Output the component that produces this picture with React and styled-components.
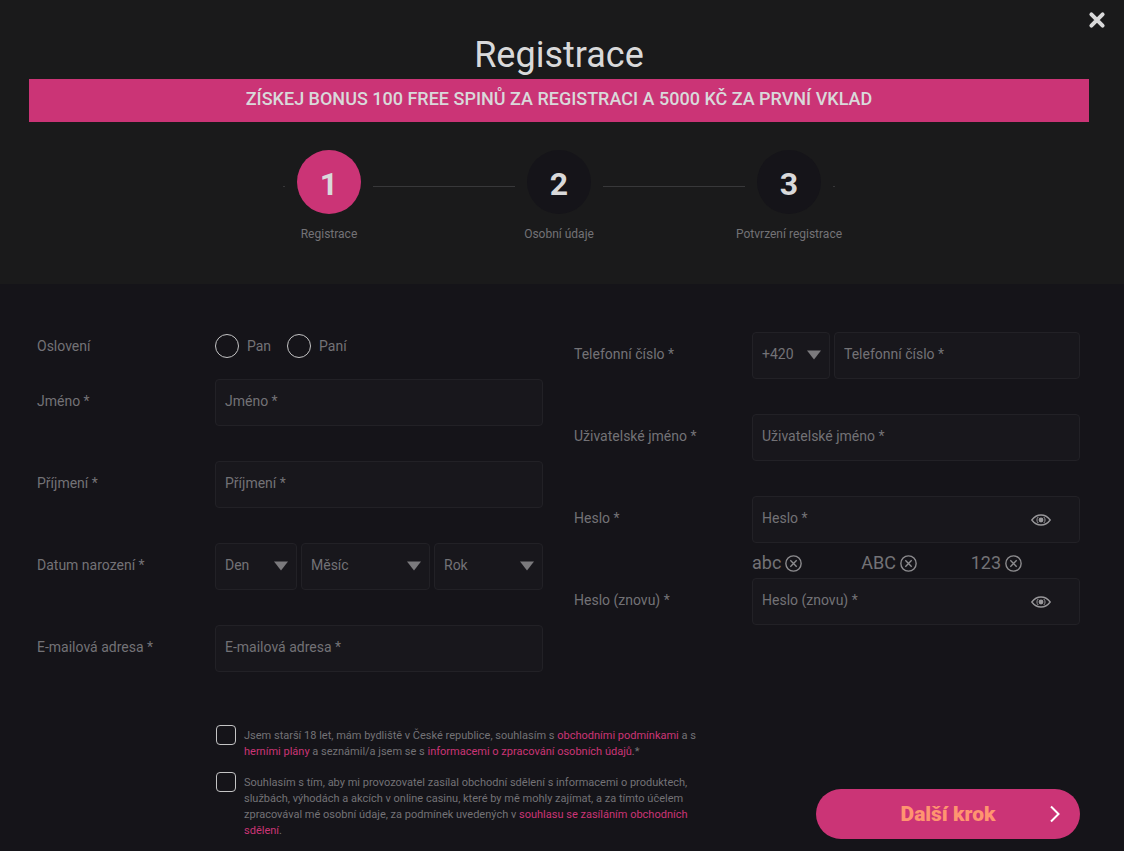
import React from "react";
import styled, { createGlobalStyle, css } from "styled-components";

const Global = createGlobalStyle`
  * { box-sizing: border-box; }
  body {
    margin: 0;
    background: #151419;
    color: #737276;
    font-family: Roboto, "Liberation Sans", sans-serif;
    font-size: 14px;
    line-height: 20px;
  }
`;

const pink = "#cb3476";
const light = "#d9d9da";

const Page = styled.main`
  position: relative;
  min-height: 100vh;
`;

const Header = styled.header`
  display: flex;
  flex-direction: column;
  align-items: center;
  min-height: 284px;
  padding: 31px 35px 40px 29px;
  background: #1a1a1b;
`;

const Title = styled.h1`
  margin: 0;
  color: ${light};
  font-size: 36px;
  font-weight: 400;
  line-height: 48px;
`;

const Banner = styled.p`
  width: 100%;
  margin: 0 0 28px;
  padding: 8px 16px 11px;
  background: ${pink};
  color: ${light};
  font-size: 18px;
  font-weight: 500;
  line-height: 24px;
  text-align: center;
`;

const CloseButton = styled.button`
  position: absolute;
  top: 8px;
  right: 15px;
  display: flex;
  padding: 0;
  border: 0;
  background: none;
  color: ${light};
  cursor: pointer;
`;

const Steps = styled.ol`
  display: flex;
  gap: 12px;
  width: 100%;
  max-width: 552px;
  margin: 0;
  padding: 0;
  list-style: none;
`;

const StepLine = styled.li`
  flex: ${(p) => (p.$end ? "0 0 2px" : "1")};
  height: 1px;
  margin-top: 36px;
  background: #38383a;
`;

const Step = styled.li`
  display: flex;
  flex-direction: column;
  align-items: center;
  width: 64px;
  font-size: 12px;
  line-height: 16px;
  white-space: nowrap;
`;

const StepNumber = styled.span`
  display: flex;
  align-items: center;
  justify-content: center;
  width: 64px;
  height: 64px;
  margin-bottom: 12px;
  padding-top: 4px;
  border-radius: 50%;
  background: ${(p) => (p.$active ? pink : "#151419")};
  color: ${light};
  font-size: 32px;
  font-weight: 700;
`;

const Form = styled.form`
  padding: 48px 44px 10px 37px;
`;

const Columns = styled.div`
  display: grid;
  grid-template-columns: 1fr 1fr;
  column-gap: 31px;
`;

const Row = styled.div`
  display: grid;
  grid-template-columns: 178px minmax(0, 1fr);
  grid-template-rows: 47px 35px;
`;

const rowLabel = css`
  height: 44px;
  line-height: 44px;
`;

const Label = styled.label`
  ${rowLabel}
`;

const GroupLabel = styled.span`
  ${rowLabel}
`;

const RadioRow = styled.div`
  display: grid;
  grid-template-columns: 178px minmax(0, 1fr);
  align-items: center;
  height: 28px;
  margin-bottom: 19px;
`;

const Radios = styled.div`
  display: flex;
  gap: 16px;
`;

const RadioLabel = styled.label`
  display: flex;
  align-items: center;
  gap: 8px;
`;

const Radio = styled.input`
  appearance: none;
  width: 24px;
  height: 24px;
  margin: 0;
  border: 1px solid #c4c4c5;
  border-radius: 50%;
  &:checked { box-shadow: inset 0 0 0 5px #151419; background: ${pink}; }
`;

const control = css`
  width: 100%;
  height: 47px;
  padding: 0 9px 3px;
  border: 1px solid #222126;
  border-radius: 4px;
  background: #18171c;
  color: #737276;
  font: inherit;
`;

const TextInput = styled.input`
  ${control}
  &::placeholder { color: #737276; opacity: 1; }
`;

const SelectBox = styled.div`
  position: relative;
`;

const SelectInput = styled.select`
  ${control}
  appearance: none;
`;

const Arrow = styled.svg`
  position: absolute;
  top: 18px;
  right: 9px;
  pointer-events: none;
`;

const DateFields = styled.div`
  display: grid;
  grid-template-columns: 82fr 129fr 109fr;
  gap: 4px;
`;

const PhoneFields = styled.div`
  display: grid;
  grid-template-columns: 78px 1fr;
  gap: 4px;
`;

const PasswordBox = styled.div`
  position: relative;
`;

const RevealButton = styled.button`
  position: absolute;
  top: 17px;
  right: 29px;
  display: flex;
  padding: 0;
  border: 0;
  background: none;
  color: #99989b;
  cursor: pointer;
`;

const Rules = styled.ul`
  grid-column: 2;
  display: grid;
  grid-template-columns: repeat(3, 1fr);
  margin: 0;
  padding: 8px 0 3px;
  list-style: none;
  font-size: 18px;
  line-height: 24px;
`;

const Rule = styled.li`
  display: flex;
  align-items: center;
  gap: 4px;
`;

const Footer = styled.div`
  display: flex;
  align-items: flex-end;
  justify-content: space-between;
  gap: 24px;
  padding: 18px 0 0 179px;
`;

const Consents = styled.div`
  display: grid;
  gap: 12px;
`;

const Consent = styled.label`
  display: grid;
  grid-template-columns: 20px 1fr;
  column-gap: 8px;
  font-size: 11px;
  line-height: 16px;
  white-space: nowrap;
`;

const Checkbox = styled.input`
  appearance: none;
  width: 20px;
  height: 20px;
  margin: 0;
  border: 1px solid #c4c4c5;
  border-radius: 4px;
  &:checked { background: ${pink}; }
`;

const ConsentText = styled.span`
  padding-top: 3px;
`;

const Link = styled.a`
  color: ${pink};
  text-decoration: none;
`;

const NextButton = styled.button`
  position: relative;
  width: 264px;
  height: 50px;
  border: 0;
  border-radius: 25px;
  background: ${pink};
  color: #ff9470;
  font-family: inherit;
  font-size: 21px;
  font-weight: 900;
  cursor: pointer;
`;

const NextIcon = styled.svg`
  position: absolute;
  top: 16px;
  right: 19px;
`;

function Select({ id, label, value, options = [] }) {
  return (
    <SelectBox>
      <SelectInput id={id} aria-label={label} defaultValue={value}>
        <option>{value}</option>
        {options.map((o) => <option key={o}>{o}</option>)}
      </SelectInput>
      <Arrow width="14" height="10" viewBox="0 0 14 10" aria-hidden="true">
        <path d="M0 0.5H14L7 9.5Z" fill="#7b7a7d" />
      </Arrow>
    </SelectBox>
  );
}

function Field({ id, label, type = "text" }) {
  return (
    <Row>
      <Label htmlFor={id}>{label}</Label>
      <TextInput id={id} type={type} placeholder={label} />
    </Row>
  );
}

function PasswordField({ id, label, children }) {
  return (
    <Row>
      <Label htmlFor={id}>{label}</Label>
      <PasswordBox>
        <TextInput id={id} type="password" placeholder={label} />
        <RevealButton type="button" aria-label="Zobrazit heslo">
          <svg width="20" height="14" viewBox="0 0 20 14" fill="none" stroke="currentColor">
            <path d="M0.8 7C3 4 6.2 2 10 2S17 4 19.2 7C17 10 13.8 12 10 12S3 10 0.8 7Z" strokeWidth="1.3" />
            <path d="M7.3 3.9A4.2 4.2 0 0 0 7.3 10.1M12.7 3.9A4.2 4.2 0 0 1 12.7 10.1" strokeWidth="1" />
            <circle cx="10" cy="7" r="2.4" fill="currentColor" stroke="none" />
          </svg>
        </RevealButton>
      </PasswordBox>
      {children}
    </Row>
  );
}

export default function App() {
  return (
    <Page>
      <Global />
      <Header>
        <Title>Registrace</Title>
        <Banner>ZÍSKEJ BONUS 100 FREE SPINŮ ZA REGISTRACI A 5000 KČ ZA PRVNÍ VKLAD</Banner>
        <Steps>
          <StepLine $end aria-hidden="true" />
          <Step><StepNumber $active>1</StepNumber>Registrace</Step>
          <StepLine aria-hidden="true" />
          <Step><StepNumber>2</StepNumber>Osobní údaje</Step>
          <StepLine aria-hidden="true" />
          <Step><StepNumber>3</StepNumber>Potvrzení registrace</Step>
          <StepLine $end aria-hidden="true" />
        </Steps>
      </Header>
      <CloseButton type="button" aria-label="Zavřít">
        <svg width="24" height="24" viewBox="0 0 24 24" fill="none" stroke="currentColor" strokeWidth="4" strokeLinecap="round">
          <path d="M6.4 6.4L17.6 17.6M17.6 6.4L6.4 17.6" />
        </svg>
      </CloseButton>
      <Form onSubmit={(e) => e.preventDefault()}>
        <Columns>
          <div>
            <RadioRow role="radiogroup" aria-labelledby="salutation">
              <span id="salutation">Oslovení</span>
              <Radios>
                <RadioLabel><Radio type="radio" name="salutation" />Pan</RadioLabel>
                <RadioLabel><Radio type="radio" name="salutation" />Paní</RadioLabel>
              </Radios>
            </RadioRow>
            <Field id="first" label="Jméno *" />
            <Field id="last" label="Příjmení *" />
            <Row>
              <GroupLabel>Datum narození *</GroupLabel>
              <DateFields role="group" aria-label="Datum narození">
                <Select label="Den" value="Den" options={["1", "2", "3"]} />
                <Select label="Měsíc" value="Měsíc" options={["Leden", "Únor", "Březen"]} />
                <Select label="Rok" value="Rok" options={["2000", "1999", "1998"]} />
              </DateFields>
            </Row>
            <Field id="email" label="E-mailová adresa *" type="email" />
          </div>
          <div>
            <Row>
              <Label htmlFor="phone">Telefonní číslo *</Label>
              <PhoneFields>
                <Select label="Předvolba" value="+420" options={["+421"]} />
                <TextInput id="phone" type="tel" placeholder="Telefonní číslo *" />
              </PhoneFields>
            </Row>
            <Field id="user" label="Uživatelské jméno *" />
            <PasswordField id="password" label="Heslo *">
              <Rules>
                {["abc", "ABC", "123"].map((rule) => (
                  <Rule key={rule}>
                    {rule}
                    <svg width="17" height="17" viewBox="0 0 16 16" fill="none" stroke="#8d8c8f" strokeWidth="1.3" aria-hidden="true">
                      <circle cx="8" cy="8" r="7.2" />
                      <path d="M5 5L11 11M11 5L5 11" />
                    </svg>
                  </Rule>
                ))}
              </Rules>
            </PasswordField>
            <PasswordField id="password2" label="Heslo (znovu) *" />
          </div>
        </Columns>
        <Footer>
          <Consents>
            <Consent>
              <Checkbox type="checkbox" />
              <ConsentText>
                Jsem starší 18 let, mám bydliště v České republice, souhlasím s <Link href="#terms">obchodními podmínkami</Link> a s<br />
                <Link href="#games">herními plány</Link> a seznámil/a jsem se s <Link href="#privacy">informacemi o zpracování osobních údajů</Link>.*
              </ConsentText>
            </Consent>
            <Consent>
              <Checkbox type="checkbox" />
              <ConsentText>
                Souhlasím s tím, aby mi provozovatel zasílal obchodní sdělení s informacemi o produktech,<br />
                službách, výhodách a akcích v online casinu, které by mě mohly zajímat, a za tímto účelem<br />
                zpracovával mé osobní údaje, za podmínek uvedených v <Link href="#marketing">souhlasu se zasíláním obchodních<br />sdělení</Link>.
              </ConsentText>
            </Consent>
          </Consents>
          <NextButton type="submit">
            Další krok
            <NextIcon width="12" height="18" viewBox="0 0 12 18" fill="none" stroke="#fff" strokeWidth="2" aria-hidden="true">
              <path d="M2 1.5L9.5 9L2 16.5" />
            </NextIcon>
          </NextButton>
        </Footer>
      </Form>
    </Page>
  );
}
